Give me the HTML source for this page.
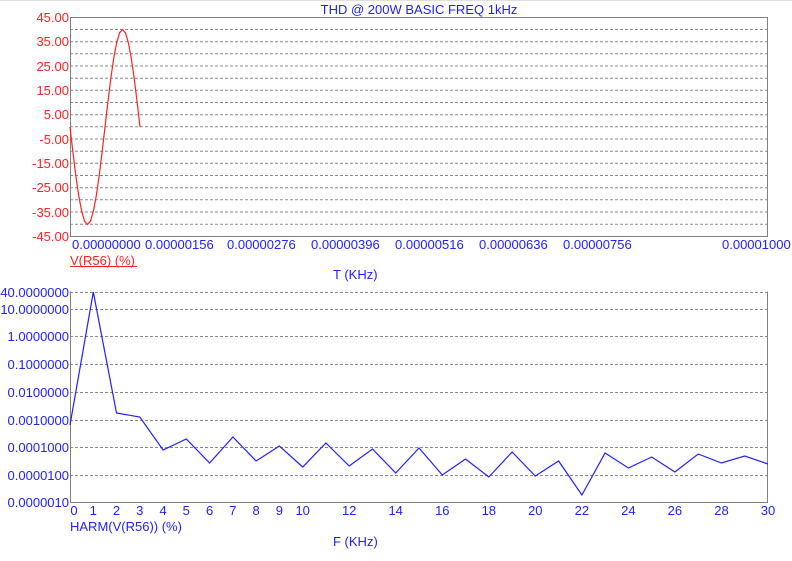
<!DOCTYPE html>
<html><head><meta charset="utf-8"><style>
html,body{margin:0;padding:0;background:#fff;width:792px;height:561px;overflow:hidden}
svg{display:block}
text{font-family:"Liberation Sans",Arial,sans-serif;font-size:13px}
</style></head><body>
<svg width="792" height="561" viewBox="0 0 792 561" xmlns="http://www.w3.org/2000/svg">
<rect x="0" y="0" width="792" height="1" fill="#e0e0e0"/>
<text x="419" y="14" fill="#2020ff" text-anchor="middle">THD @ 200W BASIC FREQ 1kHz</text>
<g stroke="#888" stroke-width="1" stroke-dasharray="3,2" fill="none">
<path d="M70 29.5H768M70 41.7H768M70 53.8H768M70 66H768M70 78.2H768M70 90.3H768M70 102.5H768M70 114.7H768M70 126.8H768M70 139H768M70 151.2H768M70 163.3H768M70 175.5H768M70 187.7H768M70 199.8H768M70 212H768M70 224.2H768"/>
<path d="M70 292.5H768M70 309.5H768M70 336.5H768M70 364.5H768M70 392.5H768M70 420.5H768M70 447.5H768M70 475.5H768"/>
</g>
<rect x="70.5" y="17.5" width="697" height="219" fill="none" stroke="#808080"/>
<path d="M70.5 291.5V502.5H767.5V291.5" fill="none" stroke="#808080"/>
<g fill="#ff2020" text-anchor="end">
<text x="69" y="22">45.00</text><text x="69" y="46">35.00</text><text x="69" y="71">25.00</text><text x="69" y="95">15.00</text><text x="69" y="119">5.00</text><text x="69" y="144">-5.00</text><text x="69" y="168">-15.00</text><text x="69" y="192">-25.00</text><text x="69" y="217">-35.00</text><text x="69" y="241">-45.00</text>
</g>
<polyline fill="none" stroke="#ff2020" stroke-width="1.2" points="70,127 72.92,152.2 75.83,175.8 78.75,195.9 81.67,211.4 84.58,221.2 87.5,224.5 90.42,221.2 93.33,211.4 96.25,195.9 99.17,175.8 102.08,152.2 105,127 107.92,101.8 110.83,78.2 113.75,58.1 116.67,42.6 119.58,32.8 122.5,29.5 125.42,32.8 128.33,42.6 131.25,58.1 134.17,78.2 137.08,101.8 140,127"/>
<g fill="#2020ff">
<text x="72" y="249">0.00000000</text><text x="145" y="249">0.00000156</text><text x="227" y="249">0.00000276</text><text x="311" y="249">0.00000396</text><text x="395" y="249">0.00000516</text><text x="479" y="249">0.00000636</text><text x="563" y="249">0.00000756</text><text x="722" y="249">0.00001000</text>
<text x="333" y="279">T (KHz)</text>
</g>
<text x="70" y="265" fill="#ff2020">V(R56) (%)</text>
<rect x="70" y="266" width="67" height="1" fill="#ff2020"/>
<g fill="#2020ff" text-anchor="end">
<text x="69" y="297">40.0000000</text><text x="69" y="314">10.0000000</text><text x="69" y="341">1.0000000</text><text x="69" y="369">0.1000000</text><text x="69" y="397">0.0100000</text><text x="69" y="425">0.0010000</text><text x="69" y="452">0.0001000</text><text x="69" y="480">0.0000100</text><text x="69" y="507">0.0000010</text>
</g>
<polyline fill="none" stroke="#2020ff" stroke-width="1.2" points="70,425 93.3,292 116.5,413 139.8,417 163.1,450 186.3,439 209.6,463 232.9,437 256.1,461 279.4,446 302.7,467 325.9,443 349.2,466 372.5,449 395.7,473 419,448 442.3,475 465.5,459 488.8,477 512.1,452 535.3,476 558.6,461 581.9,495 605.1,453 628.4,468 651.7,457 674.9,472 698.2,454 721.5,463 744.7,456 768,464"/>
<g fill="#2020ff" text-anchor="middle">
<text x="74" y="515">0</text><text x="93.3" y="515">1</text><text x="116.5" y="515">2</text><text x="139.8" y="515">3</text><text x="163.1" y="515">4</text><text x="186.3" y="515">5</text><text x="209.6" y="515">6</text><text x="232.9" y="515">7</text><text x="256.1" y="515">8</text><text x="279.4" y="515">9</text><text x="302.7" y="515">10</text><text x="349.2" y="515">12</text><text x="395.7" y="515">14</text><text x="442.3" y="515">16</text><text x="488.8" y="515">18</text><text x="535.3" y="515">20</text><text x="581.9" y="515">22</text><text x="628.4" y="515">24</text><text x="674.9" y="515">26</text><text x="721.5" y="515">28</text><text x="768" y="515">30</text>
</g>
<text x="70" y="531" fill="#2020ff">HARM(V(R56)) (%)</text>
<text x="333" y="546" fill="#2020ff">F (KHz)</text>
</svg>
</body></html>
